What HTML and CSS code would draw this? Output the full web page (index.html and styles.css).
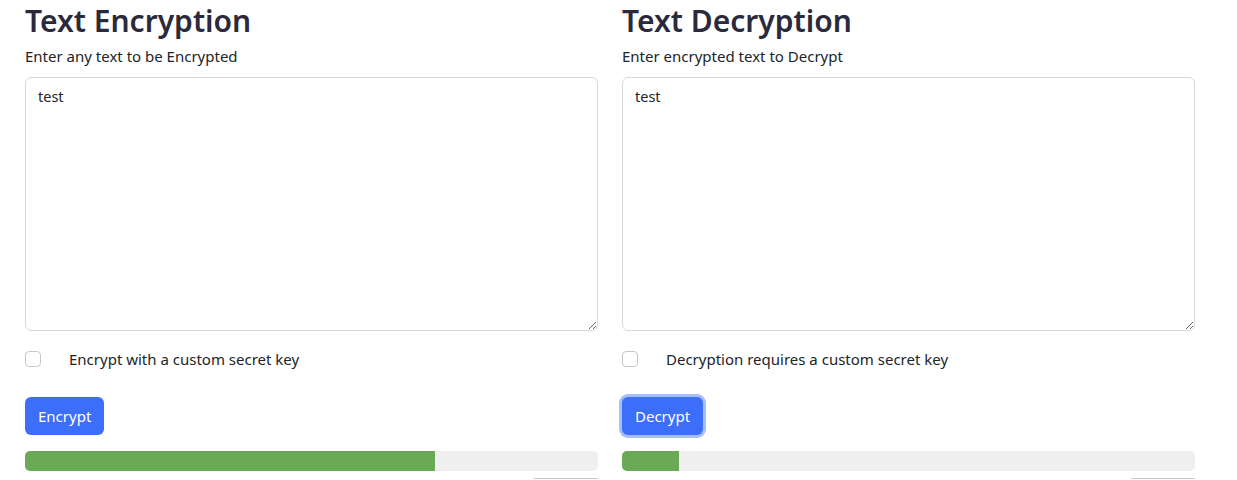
FILE: index.html
```html
<!DOCTYPE html>
<html lang="en">
    <head>
        <meta charset="utf-8">
        <link rel="stylesheet" href="styles.css">
    </head>
    <body>
<div id="container">
    <div class="panel">
        <h2>Text Encryption</h2>
        <label class="fieldlabel" for="plain">Enter any text to be Encrypted</label>
        <textarea id="plain" class="textbox">test</textarea>
        <div class="checkrow">
            <input type="checkbox" id="enckey">
            <label for="enckey">Encrypt with a custom secret key</label>
        </div>
        <button class="actionbtn">Encrypt</button>
        <div class="progress"><div class="bar" style="width: 71.6%"></div></div>
        <div class="tail"></div>
    </div>
    <div class="panel">
        <h2>Text Decryption</h2>
        <label class="fieldlabel" for="cipher">Enter encrypted text to Decrypt</label>
        <textarea id="cipher" class="textbox">test</textarea>
        <div class="checkrow">
            <input type="checkbox" id="deckey">
            <label for="deckey">Decryption requires a custom secret key</label>
        </div>
        <button class="actionbtn focused">Decrypt</button>
        <div class="progress"><div class="bar" style="width: 10%"></div></div>
        <div class="tail"></div>
    </div>
</div>
    </body>
</html>
```

FILE: styles.css
```css
body{
    margin: 0;
    font-family: "Noto Sans", "Open Sans", sans-serif;
    color: #212529;
    background: #fff;
    overflow: hidden;
}
#container{
    display: flex;
    gap: 24px;
    padding: 0 42px 0 25px;
}
.panel{
    flex: 1;
    display: flex;
    flex-direction: column;
    align-items: flex-start;
}
h2{
    margin: 2px 0 0 0;
    font-size: 30px;
    font-weight: 600;
    line-height: 38px;
    color: #2a2a3c;
}
.fieldlabel{
    margin-top: 6px;
    font-size: 15px;
    line-height: 20px;
}
.textbox{
    box-sizing: border-box;
    margin-top: 11px;
    width: 100%;
    height: 254px;
    padding: 8px 12px;
    border: 1px solid #d6d9dd;
    border-radius: 6px;
    font-family: inherit;
    font-size: 14.5px;
    color: #212529;
    resize: vertical;
}
.checkrow{
    display: flex;
    align-items: center;
    margin-top: 18px;
    height: 20px;
    font-size: 15px;
}
.checkrow input{
    appearance: none;
    margin: 0;
    width: 16px;
    height: 16px;
    border: 1px solid #c4c7cb;
    border-radius: 4px;
}
.checkrow label{
    margin-left: 28px;
}
.actionbtn{
    margin-top: 28px;
    height: 38px;
    padding: 0 13px;
    border: 0;
    border-radius: 6px;
    background-color: #3d6ef9;
    color: #fff;
    font-family: inherit;
    font-size: 15px;
}
.focused{
    box-shadow: 0 0 0 3px #a5bffb;
}
.progress{
    margin-top: 16px;
    width: 100%;
    height: 20px;
    border-radius: 5px;
    background-color: #efefef;
    overflow: hidden;
}
.bar{
    height: 100%;
    background-color: #6aa955;
}
.tail{
    align-self: flex-end;
    margin-top: 7px;
    width: 64px;
    border-top: 1px solid #c8c8c8;
}
```
